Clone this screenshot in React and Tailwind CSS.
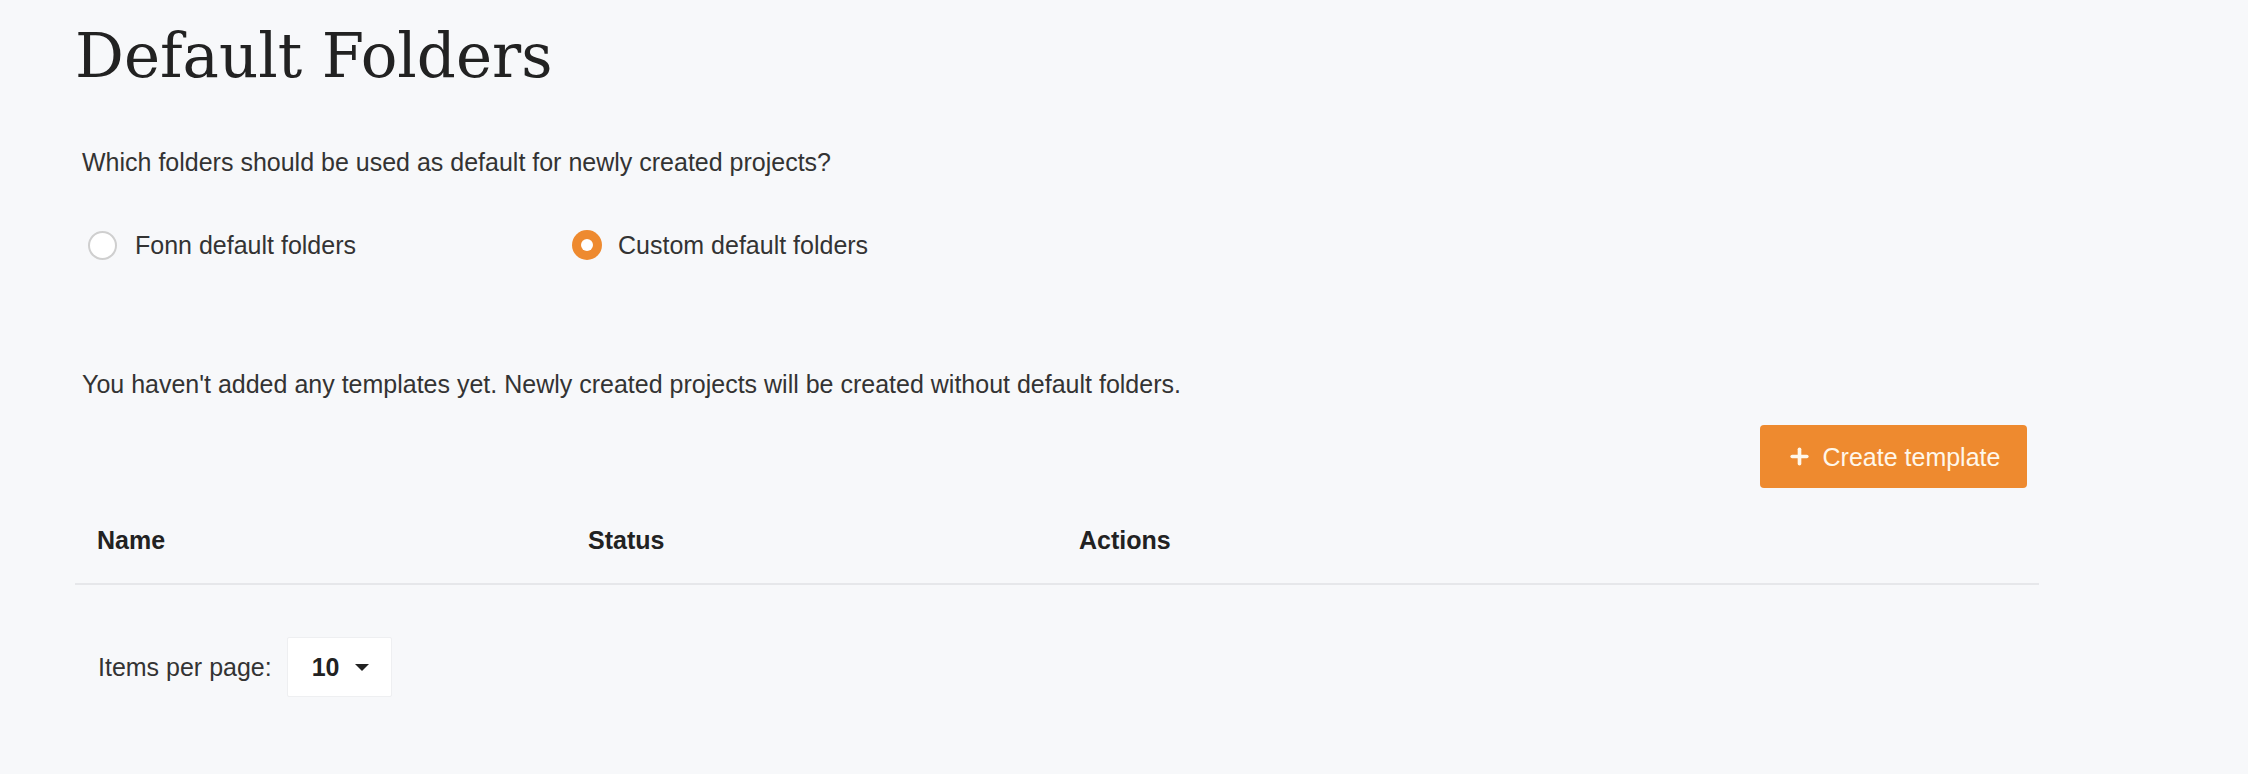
import { Plus } from 'lucide-react';

function Radio({ checked, label, className = '' }) {
  return (
    <label className={`flex items-center ${className}`}>
      {checked ? (
        <span className="w-[30px] h-[30px] rounded-full bg-[#ee8a2f] grid place-items-center shrink-0">
          <span className="w-[12px] h-[12px] rounded-full bg-white" />
        </span>
      ) : (
        <span className="w-[29px] h-[29px] rounded-full bg-white border-2 border-[#cfcfcf] shrink-0" />
      )}
      <span className={checked ? 'ml-[16px]' : 'ml-[18px]'}>{label}</span>
    </label>
  );
}

export default function App() {
  return (
    <div className="min-h-screen bg-[#f7f8fa] text-[#333333] font-['Liberation_Sans',Arial,sans-serif] text-[25px] leading-[32px]">
      <div className="pt-[25px] pl-[75px]">
        <h1 className="font-['DejaVu_Serif',serif] text-[61px] leading-[62px] text-[#222222]">
          Default Folders
        </h1>

        <p className="mt-[59px] pl-[7px]">
          Which folders should be used as default for newly created projects?
        </p>

        <div className="mt-[52px] pl-[13px] flex items-center h-[30px]">
          <Radio label="Fonn default folders" className="w-[484px]" />
          <Radio checked label="Custom default folders" />
        </div>

        <p className="mt-[108px] pl-[7px]">
          You haven't added any templates yet. Newly created projects will be created without default
          folders.
        </p>

        <div className="w-[1964px]">
          <div className="mt-[25px] flex justify-end pr-[12px]">
            <button className="h-[63px] w-[267px] rounded-[4px] bg-[#ee8a2f] text-[#fff7ea] flex items-center justify-center gap-[11px]">
              <Plus className="w-[25px] h-[25px]" strokeWidth={3.5} />
              <span>Create template</span>
            </button>
          </div>

          <div className="grid grid-cols-4 pt-[36px] pb-[27px] border-b-2 border-[#e6e7ea] font-bold text-[#222222]">
            <div className="pl-[22px]">Name</div>
            <div className="pl-[22px]">Status</div>
            <div className="pl-[22px]">Actions</div>
            <div />
          </div>

          <div className="mt-[52px] pl-[23px] flex items-center">
            <span>Items per page:</span>
            <div className="ml-[15px] h-[60px] w-[105px] bg-white border border-[#eeeff1] rounded-[2px] flex items-center pl-[24px]">
              <span className="font-bold text-[#222222]">10</span>
              <span className="ml-[15px] w-0 h-0 border-l-[7px] border-r-[7px] border-t-[7px] border-l-transparent border-r-transparent border-t-[#222222]" />
            </div>
          </div>
        </div>
      </div>
    </div>
  );
}
